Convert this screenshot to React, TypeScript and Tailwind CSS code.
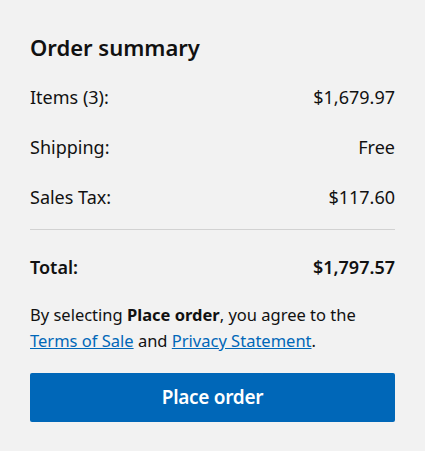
import React from "react";

const font = { fontFamily: '"Noto Sans", "Open Sans", sans-serif' };

function Row({ label, value, bold }: { label: string; value: string; bold?: boolean }) {
  return (
    <div className={`flex h-[50px] items-center justify-between text-[18px] leading-[26px] ${bold ? "font-semibold" : ""}`}>
      <span>{label}</span>
      <span>{value}</span>
    </div>
  );
}

export default function App() {
  return (
    <div className="w-[425px] h-[451px] bg-[#f2f2f2] px-[30px] pt-[32px] text-[#111111]" style={font}>
      <h2 className="h-[30px] text-[22px] leading-[30px] font-semibold">Order summary</h2>
      <div className="mt-[10px]">
        <Row label="Items (3):" value="$1,679.97" />
        <Row label="Shipping:" value="Free" />
        <Row label="Sales Tax:" value="$117.60" />
      </div>
      <div className="mt-[7px] h-px bg-[#d2d2d2]" />
      <div className="mt-[12px]">
        <Row label="Total:" value="$1,797.57" bold />
      </div>
      <p className="mt-[10px] text-[16.5px] leading-[26px]">
        By selecting <span className="font-bold">Place order</span>, you agree to the{" "}
        <a href="#" className="text-[#0067b8] underline">Terms of Sale</a> and{" "}
        <a href="#" className="text-[#0067b8] underline">Privacy Statement</a>.
      </p>
      <button className="mt-[19px] flex h-[49px] w-full items-center justify-center rounded-[2px] bg-[#0067b8] text-[19px] tracking-[-0.3px] font-semibold text-white">
        Place order
      </button>
    </div>
  );
}
